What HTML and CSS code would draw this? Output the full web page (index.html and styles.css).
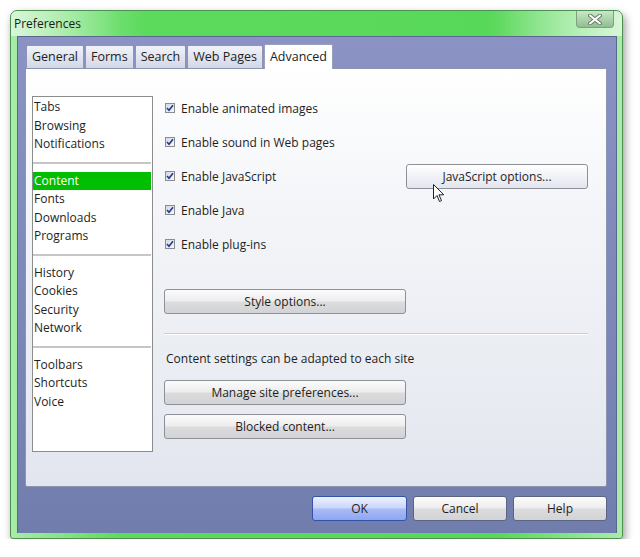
FILE: index.html
```html
<!DOCTYPE html>
<html lang="en">
<head>
  <meta charset="UTF-8">
  <title>Preferences</title>
  <link rel="stylesheet" href="styles.css">
</head>
<body>
  <div class="window">
    <div class="titlebar">
      <span class="title">Preferences</span>
      <button class="close">
        <svg width="14" height="11" viewBox="0 0 14 11">
          <path d="M2 1.5 L12 9.5 M12 1.5 L2 9.5" stroke="#6b7d6b" stroke-width="4" stroke-linecap="round"/>
          <path d="M2 1.5 L12 9.5 M12 1.5 L2 9.5" stroke="#ffffff" stroke-width="2" stroke-linecap="round"/>
        </svg>
      </button>
    </div>

    <div class="client">
      <div class="tabs">
        <div class="tab">General</div>
        <div class="tab">Forms</div>
        <div class="tab">Search</div>
        <div class="tab">Web Pages</div>
        <div class="tab active">Advanced</div>
      </div>

      <div class="panel">
        <ul class="sections">
          <li>Tabs</li>
          <li>Browsing</li>
          <li>Notifications</li>
          <li class="sep"></li>
          <li class="selected">Content</li>
          <li>Fonts</li>
          <li>Downloads</li>
          <li>Programs</li>
          <li class="sep"></li>
          <li>History</li>
          <li>Cookies</li>
          <li>Security</li>
          <li>Network</li>
          <li class="sep"></li>
          <li>Toolbars</li>
          <li>Shortcuts</li>
          <li>Voice</li>
        </ul>

        <div class="options">
          <div class="row"><span class="check"><svg width="8" height="8" viewBox="0 0 8 8"><path d="M1 4 L3 6.3 L7 1.2" fill="none" stroke="#203c8c" stroke-width="1.6"/></svg></span>Enable animated images</div>
          <div class="row"><span class="check"><svg width="8" height="8" viewBox="0 0 8 8"><path d="M1 4 L3 6.3 L7 1.2" fill="none" stroke="#203c8c" stroke-width="1.6"/></svg></span>Enable sound in Web pages</div>
          <div class="row"><span class="check"><svg width="8" height="8" viewBox="0 0 8 8"><path d="M1 4 L3 6.3 L7 1.2" fill="none" stroke="#203c8c" stroke-width="1.6"/></svg></span>Enable JavaScript
            <button class="btn btn-js">JavaScript options...</button>
          </div>
          <div class="row"><span class="check"><svg width="8" height="8" viewBox="0 0 8 8"><path d="M1 4 L3 6.3 L7 1.2" fill="none" stroke="#203c8c" stroke-width="1.6"/></svg></span>Enable Java</div>
          <div class="row"><span class="check"><svg width="8" height="8" viewBox="0 0 8 8"><path d="M1 4 L3 6.3 L7 1.2" fill="none" stroke="#203c8c" stroke-width="1.6"/></svg></span>Enable plug-ins</div>

          <button class="btn btn-wide btn-style">Style options...</button>
          <div class="divider"></div>
          <p class="note">Content settings can be adapted to each site</p>
          <button class="btn btn-wide">Manage site preferences...</button>
          <button class="btn btn-wide btn-blocked">Blocked content...</button>
        </div>
      </div>

      <div class="footer">
        <button class="btn btn-foot btn-ok">OK</button>
        <button class="btn btn-foot">Cancel</button>
        <button class="btn btn-foot">Help</button>
      </div>
    </div>
  </div>

  <svg class="cursor" width="12" height="19" viewBox="0 0 12 19">
    <path d="M0.5 0.5 L0.5 15 L4 11.5 L6.5 17.5 L8.5 16.6 L6 10.8 L10.8 10.8 Z" fill="#ffffff" stroke="#222222" stroke-width="1"/>
  </svg>
</body>
</html>
```

FILE: styles.css
```css
body {
  margin: 0;
  background-color: #ffffff;
  font-family: "Open Sans", "Noto Sans", sans-serif;
  font-size: 12px;
  color: #1e1e1e;
}
.window {
  box-sizing: border-box;
  width: 613px;
  height: 529px;
  margin: 10px 0 0 10px;
  padding: 0 5px 5px 6px;
  display: flex;
  flex-direction: column;
  border: 1px solid #4f8f4f;
  border-radius: 7px 7px 3px 3px;
  background: linear-gradient(90deg, #a9eca9 0%, #5cda5c 18%, #58d858 80%, #a9eca9 100%);
  box-shadow: 2px 4px 9px rgba(0,0,0,0.4);
}
.titlebar {
  height: 25px;
  margin: 0 -5px 0 -6px;
  padding-left: 3px;
  display: flex;
  align-items: flex-start;
  justify-content: space-between;
  border-radius: 6px 6px 0 0;
  background: linear-gradient(90deg, rgba(255,255,255,0.55) 0%, rgba(255,255,255,0) 22%, rgba(255,255,255,0) 78%, rgba(255,255,255,0.55) 100%);
}
.title {
  font-size: 12px;
  line-height: 25px;
  color: #1a1a1a;
}
.close {
  width: 38px;
  height: 17px;
  margin-right: 8px;
  padding: 0;
  border: 1px solid #7fa07f;
  border-top: none;
  border-radius: 0 0 4px 4px;
  background: linear-gradient(#c8e8c8, #8fbf8f);
  display: flex;
  align-items: center;
  justify-content: center;
}
.client {
  flex: 1;
  display: flex;
  flex-direction: column;
  padding: 9px 10px 12px 8px;
  background: linear-gradient(#8a93c3, #717ead);
  box-shadow: inset 0 1px 0 #5a6690, inset 1px 0 0 #5a6690, inset -1px 0 0 #5a6690;
}
.tabs {
  height: 23px;
  display: flex;
  align-items: flex-end;
  gap: 1px;
  margin-left: 1px;
}
.tab {
  box-sizing: border-box;
  height: 23px;
  padding: 0 5px;
  line-height: 22px;
  font-size: 12.5px;
  color: #222;
  border: 1px solid #8e95b5;
  border-bottom: none;
  border-radius: 2px 2px 0 0;
  background: linear-gradient(#f1f3f9, #d3d7e6);
}
.tab.active {
  position: relative;
  z-index: 1;
  height: 25px;
  margin-bottom: -1px;
  line-height: 24px;
  background: #ffffff;
  border-color: #9aa0bd;
}
.panel {
  box-sizing: border-box;
  height: 419px;
  display: flex;
  align-items: flex-start;
  padding: 22px 0 0 6px;
  border: 1px solid #8d94b0;
  border-radius: 0 0 2px 2px;
  background: linear-gradient(#ffffff 0%, #f4f6f9 30%, #e3e6ee 100%);
}
.sections {
  box-sizing: border-box;
  width: 121px;
  height: 356px;
  margin: 5px 0 0 0;
  padding: 1px 0;
  list-style: none;
  background: #ffffff;
  border: 1px solid #8c8c8c;
}
.sections li {
  height: 18.5px;
  line-height: 18.5px;
  padding-left: 1px;
  margin-right: 1px;
  font-size: 12px;
}
.sections li.selected {
  background: #00bf00;
  color: #ffffff;
}
.sections li.sep {
  height: 8px;
  margin: 0 1px 8px 0;
  border-bottom: 2px solid #c6c6c6;
}
.options {
  width: 424px;
  margin-left: 11px;
  display: flex;
  flex-direction: column;
  align-items: flex-start;
}
.row {
  width: 100%;
  height: 34px;
  display: flex;
  align-items: center;
  font-size: 12px;
}
.check {
  box-sizing: border-box;
  width: 10px;
  height: 10px;
  margin: 0 6px 0 1px;
  border: 1px solid #8a8c92;
  background: linear-gradient(135deg, #d5d9e2, #f7f8fa);
  display: flex;
  align-items: center;
  justify-content: center;
}
.btn {
  box-sizing: border-box;
  height: 25px;
  padding: 0;
  font-family: "Open Sans", "Noto Sans", sans-serif;
  font-size: 12px;
  color: #1e1e1e;
  border: 1px solid #8f9097;
  border-radius: 3px;
  background: linear-gradient(#fbfbfb 0%, #ededed 48%, #dcdcde 52%, #d2d3d6 100%);
}
.btn-js {
  width: 182px;
  margin-left: auto;
  background: linear-gradient(#ffffff 0%, #f1f2f7 50%, #e3e5ef 100%);
}
.btn-wide {
  width: 242px;
}
.btn-style {
  margin-top: 28px;
}
.divider {
  width: 424px;
  margin-top: 19px;
  border-top: 1px solid #c9ccd4;
  border-bottom: 1px solid #ffffff;
}
.note {
  margin: 15px 0 13px 2px;
  line-height: 17px;
  font-size: 12px;
}
.btn-blocked {
  margin-top: 9px;
}
.footer {
  display: flex;
  justify-content: flex-end;
  gap: 6px;
  padding-top: 9px;
}
.btn-foot {
  width: 94px;
  border-color: #5b6580;
}
.btn-ok {
  width: 95px;
  border-color: #3553a8;
  background: linear-gradient(#eef2ff 0%, #c9d5fb 48%, #a9bcf6 52%, #8ea6f0 100%);
}
.cursor {
  position: absolute;
  left: 433px;
  top: 184px;
}
```
